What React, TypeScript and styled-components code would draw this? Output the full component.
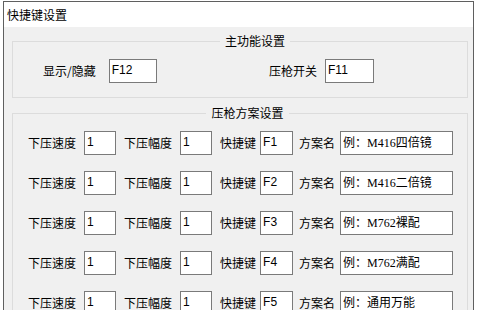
import React from 'react';
import styled, { createGlobalStyle } from 'styled-components';

const GlobalStyle = createGlobalStyle`
  html, body {
    margin: 0;
    padding: 0;
    background: #ffffff;
    overflow: hidden;
  }
`;

const Window = styled.div`
  box-sizing: border-box;
  width: 471px;
  height: 320px;
  margin: 1px 0 0 3px;
  border: 1px solid #5f5f5f;
  border-bottom: none;
  background: #f0f0f0;
  font-family: 'Noto Sans CJK SC', sans-serif;
  font-size: 12px;
  color: #000;
`;

const TitleBar = styled.div`
  display: flex;
  align-items: center;
  height: 25px;
  padding-left: 3px;
  background: #ffffff;
  line-height: 14px;
`;

const Content = styled.div`
  padding: 7px 5px 0 8px;
`;

const Group = styled.fieldset<{ $padLeft: number }>`
  box-sizing: border-box;
  min-width: 0;
  width: 456px;
  margin: 0 0 8px 0;
  padding: 11px 0 14px ${(p) => p.$padLeft}px;
  border: 1px solid #dcdcdc;
`;

const Legend = styled.legend`
  margin: 0 auto;
  padding: 0 5px;
  line-height: 14px;
`;

const MainGrid = styled.div`
  display: grid;
  grid-template-columns: 226px auto;
`;

const Field = styled.div<{ $gap: number }>`
  display: flex;
  align-items: center;
  gap: ${(p) => p.$gap}px;
`;

const Rows = styled.div`
  display: flex;
  flex-direction: column;
  gap: 16px;
`;

const Row = styled.div`
  display: flex;
  align-items: center;
`;

const Label = styled.span<{ $gap?: number }>`
  white-space: nowrap;
  line-height: 14px;
  margin-right: ${(p) => p.$gap ?? 0}px;
`;

const Box = styled.input<{ $w: number; $gap?: number; $serif?: boolean }>`
  box-sizing: border-box;
  width: ${(p) => p.$w}px;
  height: 24px;
  margin: 0 ${(p) => p.$gap ?? 0}px 0 0;
  padding: 0 1px 2px 2px;
  border: 1px solid #7a7a7a;
  border-radius: 0;
  background: #ffffff;
  outline: none;
  color: #000;
  font-size: 12px;
  font-family: ${(p) =>
    p.$serif
      ? "'Liberation Serif', 'Noto Sans CJK SC', serif"
      : "'Liberation Sans', 'Noto Sans CJK SC', sans-serif"};
`;

const plans = [
  { key: 'F1', name: '例：M416四倍镜' },
  { key: 'F2', name: '例：M416二倍镜' },
  { key: 'F3', name: '例：M762裸配' },
  { key: 'F4', name: '例：M762满配' },
  { key: 'F5', name: '例：通用万能' },
];

const App = function () {
  return (
    <>
      <GlobalStyle />
      <Window>
        <TitleBar>快捷键设置</TitleBar>
        <Content>
          <Group $padLeft={30}>
            <Legend>主功能设置</Legend>
            <MainGrid>
              <Field $gap={13}>
                <Label>显示/隐藏</Label>
                <Box $w={48} defaultValue="F12" />
              </Field>
              <Field $gap={8}>
                <Label>压枪开关</Label>
                <Box $w={49} defaultValue="F11" />
              </Field>
            </MainGrid>
          </Group>

          <Group $padLeft={15}>
            <Legend>压枪方案设置</Legend>
            <Rows>
              {plans.map((plan) => (
                <Row key={plan.key}>
                  <Label $gap={8}>下压速度</Label>
                  <Box $w={32} $gap={8} defaultValue="1" />
                  <Label $gap={8}>下压幅度</Label>
                  <Box $w={32} $gap={8} defaultValue="1" />
                  <Label $gap={4}>快捷键</Label>
                  <Box $w={33} $gap={6} defaultValue={plan.key} />
                  <Label $gap={5}>方案名</Label>
                  <Box $w={113} $serif defaultValue={plan.name} />
                </Row>
              ))}
            </Rows>
          </Group>
        </Content>
      </Window>
    </>
  );
};

export default App;
